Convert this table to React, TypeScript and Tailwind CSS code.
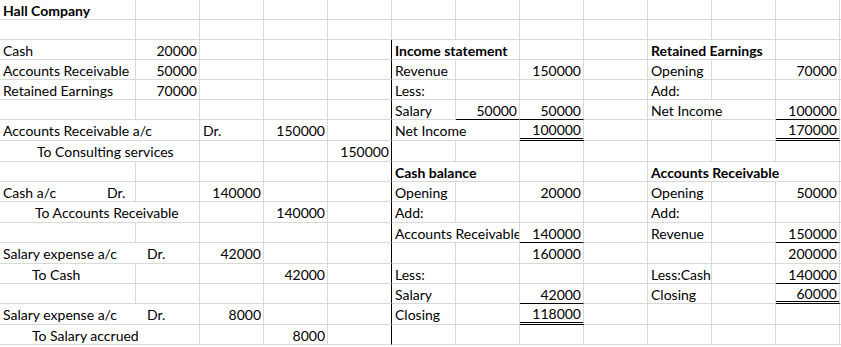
import React from "react";

type Cell = {
  c: number;
  s?: number;
  t?: React.ReactNode;
  num?: boolean;
  b?: boolean;
  u?: 1 | 2;
  pad?: string;
};

const COLS = 13;
const heights = [20, 20, 20, 20, 20, 20, 21, 21, 20, 20, 21, 20, 21, 20, 20, 21, 20];

const dr = (label: string, w: string) => (
  <>
    <span className={`inline-block ${w}`}>{label}</span>
    <span>Dr.</span>
  </>
);

const rows: Cell[][] = [
  [{ c: 0, t: "Hall Company", b: true }],
  [],
  [
    { c: 0, t: "Cash" },
    { c: 1, t: "20000", num: true },
    { c: 5, s: 2, t: "Income statement", b: true },
    { c: 9, s: 2, t: "Retained Earnings", b: true },
  ],
  [
    { c: 0, t: "Accounts Receivable" },
    { c: 1, t: "50000", num: true },
    { c: 5, t: "Revenue" },
    { c: 7, t: "150000", num: true },
    { c: 9, t: "Opening" },
    { c: 11, t: "70000", num: true },
  ],
  [
    { c: 0, t: "Retained Earnings" },
    { c: 1, t: "70000", num: true },
    { c: 5, t: "Less:" },
    { c: 9, t: "Add:" },
  ],
  [
    { c: 5, t: "Salary" },
    { c: 6, t: "50000", num: true, u: 1 },
    { c: 7, t: "50000", num: true, u: 1 },
    { c: 9, s: 2, t: "Net Income" },
    { c: 11, t: "100000", num: true, u: 1 },
  ],
  [
    { c: 0, s: 2, t: "Accounts Receivable a/c" },
    { c: 2, t: "Dr." },
    { c: 3, t: "150000", num: true },
    { c: 5, s: 2, t: "Net Income" },
    { c: 7, t: "100000", num: true, u: 2 },
    { c: 11, t: "170000", num: true, u: 2 },
  ],
  [
    { c: 0, s: 2, t: "To Consulting services", pad: "pl-[37px]" },
    { c: 4, t: "150000", num: true },
  ],
  [
    { c: 5, s: 2, t: "Cash balance", b: true },
    { c: 9, s: 3, t: "Accounts Receivable", b: true },
  ],
  [
    { c: 0, t: dr("Cash a/c", "w-[104px]") },
    { c: 2, t: "140000", num: true },
    { c: 5, t: "Opening" },
    { c: 7, t: "20000", num: true },
    { c: 9, t: "Opening" },
    { c: 11, t: "50000", num: true },
  ],
  [
    { c: 0, s: 2, t: "To Accounts Receivable", pad: "pl-[35px]" },
    { c: 3, t: "140000", num: true },
    { c: 5, t: "Add:" },
    { c: 9, t: "Add:" },
  ],
  [
    { c: 5, s: 2, t: "Accounts Receivable" },
    { c: 7, t: "140000", num: true, u: 1 },
    { c: 9, t: "Revenue" },
    { c: 11, t: "150000", num: true, u: 1 },
  ],
  [
    { c: 0, s: 2, t: dr("Salary expense a/c", "w-[144px]") },
    { c: 2, t: "42000", num: true },
    { c: 7, t: "160000", num: true },
    { c: 11, t: "200000", num: true },
  ],
  [
    { c: 0, t: "To Cash", pad: "pl-[32px]" },
    { c: 3, t: "42000", num: true },
    { c: 5, t: "Less:" },
    { c: 9, t: "Less:Cash" },
    { c: 11, t: "140000", num: true, u: 1 },
  ],
  [
    { c: 5, t: "Salary" },
    { c: 7, t: "42000", num: true, u: 1 },
    { c: 9, t: "Closing" },
    { c: 11, t: "60000", num: true, u: 2 },
  ],
  [
    { c: 0, s: 2, t: dr("Salary expense a/c", "w-[144px]") },
    { c: 2, t: "8000", num: true },
    { c: 5, t: "Closing" },
    { c: 7, t: "118000", num: true, u: 2 },
  ],
  [
    { c: 0, s: 2, t: "To Salary accrued", pad: "pl-[32px]" },
    { c: 3, t: "8000", num: true },
  ],
];

function widthClass(c: number, s: number) {
  if (c === 0) return s === 2 ? "w-[200px]" : "w-[136px]";
  if (s === 3) return "w-48";
  if (s === 2) return "w-32";
  return "w-16";
}

function SheetRow({ cells, r }: { cells: Cell[]; r: number }) {
  const out: React.ReactNode[] = [];
  let col = 0;
  while (col < COLS) {
    const cell = cells.find((x) => x.c === col) ?? { c: col };
    const span = cell.s ?? 1;
    const last = col + span - 1;
    // thick-ish black rule down the left of column F from row 3
    const dark = r >= 2 && last === 4;
    const bottom =
      cell.u === 2
        ? "border-b-[3px] border-double border-b-black"
        : cell.u === 1
          ? "border-b border-b-black"
          : "border-b border-b-[#d9d9d9]";
    out.push(
      <div
        key={col}
        className={`flex shrink-0 items-center overflow-hidden whitespace-nowrap pt-[2px] border-r ${
          dark ? "border-r-black" : "border-r-[#d9d9d9]"
        } ${bottom} ${widthClass(col, span)} ${
          cell.num ? "justify-end pr-[2px]" : cell.pad ?? "pl-[3px]"
        } ${cell.b ? "font-bold" : ""}`}
      >
        {cell.t}
      </div>
    );
    col += span;
  }
  return (
    <div className={`flex ${heights[r] === 21 ? "h-[21px]" : "h-[20px]"}`}>{out}</div>
  );
}

export default function App() {
  return (
    <div className="h-[347px] w-[841px] overflow-hidden bg-white font-['Lato',sans-serif] text-[14px] leading-none text-black">
      {rows.map((cells, r) => (
        <SheetRow key={r} cells={cells} r={r} />
      ))}
    </div>
  );
}
